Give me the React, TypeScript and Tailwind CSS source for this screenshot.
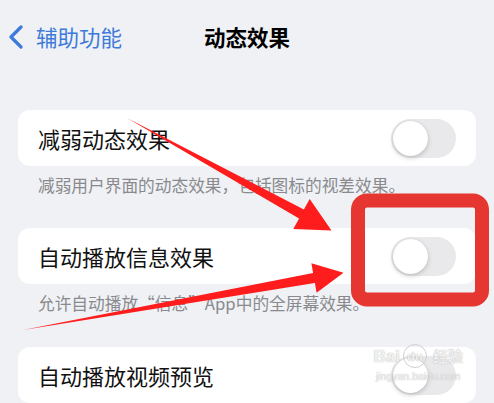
import React from 'react';

const FONT = { fontFamily: '"Noto Sans CJK SC", "Noto Sans", sans-serif' };

const Toggle: React.FC = () => (
  <div className="relative h-[39px] w-[65px] rounded-full bg-[#e9e9eb]">
    <div className="absolute left-[2px] top-[2px] h-[35px] w-[35px] rounded-full bg-white shadow-[0_2px_5px_rgba(0,0,0,0.18),0_0_1px_rgba(0,0,0,0.15)]" />
  </div>
);

interface RowProps {
  label: string;
  children?: React.ReactNode;
}

const Row: React.FC<RowProps> = ({ label, children }) => (
  <div className="relative flex h-[56px] items-center justify-between rounded-[12px] bg-white px-[20px]">
    <span className="text-[22px] leading-none text-[#111]">{label}</span>
    <Toggle />
    {children}
  </div>
);

const Note: React.FC<{ text: string }> = ({ text }) => (
  <p className="mt-[8px] h-[22px] px-[20px] text-[16.7px] leading-[22px] text-[#8a8a8e] whitespace-nowrap">{text}</p>
);

export default function App() {
  return (
    <div className="relative h-[403px] w-[494px] overflow-hidden bg-[#eff1f5]" style={FONT}>
      {/* nav bar */}
      <div className="grid h-[74px] grid-cols-3 items-center">
        <div className="flex items-center gap-[12px] pl-[8px] text-[#3d7ad9]">
          <svg width="16" height="24" viewBox="0 0 16 24" fill="none" stroke="currentColor" strokeWidth="3.2" strokeLinecap="round" strokeLinejoin="round">
            <path d="M13 2 L3 12 L13 22" />
          </svg>
          <span className="text-[21.5px] leading-none">辅助功能</span>
        </div>
        <div className="text-center text-[21.5px] font-bold leading-none text-black whitespace-nowrap">动态效果</div>
        <div />
      </div>

      <div className="mt-[36px] px-[18px]">
        <Row label="减弱动态效果" />
        <Note text="减弱用户界面的动态效果，包括图标的视差效果。" />

        <div className="mt-[32px]">
          <Row label="自动播放信息效果" />
          <Note text="允许自动播放“信息”App中的全屏幕效果。" />
        </div>

        <div className="mt-[33px]">
          <Row label="自动播放视频预览">
            {/* watermark */}
            <div className="pointer-events-none absolute right-[13px] top-[-3px] flex flex-col items-center text-white/85 [text-shadow:0_0_1px_rgba(110,110,110,0.7)]" style={{ fontFamily: '"Liberation Sans", "Noto Sans CJK SC", sans-serif' }}>
              <div className="flex items-center gap-[3px] leading-none">
                <span className="text-[17px] font-bold">Bai</span>
                <span className="flex h-[24px] w-[24px] items-center justify-center rounded-full border border-[#cfcfcf] text-[13px] font-bold">du</span>
                <span className="ml-[3px] text-[15px] font-bold">经验</span>
              </div>
              <span className="mt-[3px] text-[10.5px] leading-none">jingyan.baidu.com</span>
            </div>
          </Row>
        </div>
      </div>

      {/* annotations */}
      <svg className="pointer-events-none absolute inset-0" width="494" height="403" viewBox="0 0 494 403">
        <rect x="358" y="200.5" width="124" height="99" rx="9" fill="none" stroke="#e53631" strokeWidth="14" />
        <polygon fill="#ff1c1c" points="127,118 303.9,209.6 309.7,199.1 331.5,230.5 293.3,228.9 299.1,218.4" />
        <polygon fill="#ff1c1c" points="23,330 313.1,273.1 311.4,263.2 343.5,272.7 316.6,292.8 314.9,282.9" />
      </svg>
    </div>
  );
}
